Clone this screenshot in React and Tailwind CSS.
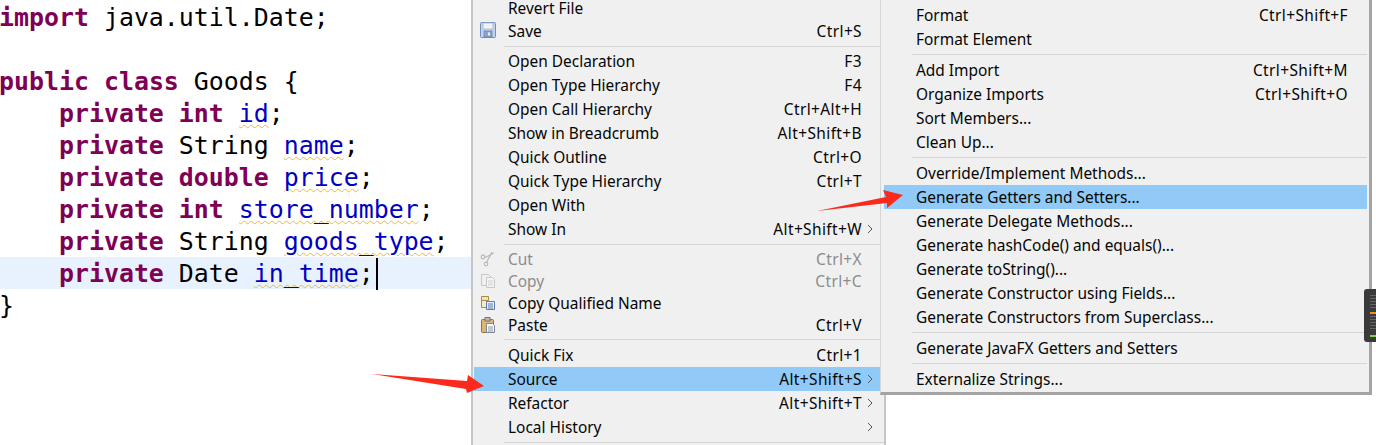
const K = ({ children }) => <span className="text-[#7f0055] font-bold">{children}</span>;
const F = ({ children }) => (
  <span className="text-[#0000c0] underline decoration-wavy decoration-[#e8b93a] decoration-1 underline-offset-[2px]">{children}</span>
);

const Code = ({ children, active }) => (
  <div className={`h-[32px] leading-[34px] whitespace-pre [text-indent:-1px] ${active ? "bg-[#e8f2fe]" : ""}`}>{children}</div>
);

const Chevron = () => (
  <svg width="6" height="10" viewBox="0 0 6 10" className="absolute left-[393px] top-[7px]">
    <path d="M1 1l4 4-4 4" fill="none" stroke="#555" strokeWidth="1" />
  </svg>
);

const SaveIcon = () => (
  <svg width="16" height="16" viewBox="0 0 16 16">
    <rect x="0.5" y="0.5" width="15" height="15" rx="1" fill="#c4d4ea" stroke="#6f8fbe" />
    <rect x="3" y="1" width="10" height="6" fill="#f2f2f2" stroke="#9fb3cf" strokeWidth="0.7" />
    <rect x="4" y="9" width="8" height="6" fill="#8aa5cc" stroke="#5f7fae" strokeWidth="0.7" />
    <rect x="8" y="10.5" width="2" height="3" fill="#eef2f8" />
  </svg>
);
const CutIcon = () => (
  <svg width="16" height="16" viewBox="0 0 16 16" fill="none" stroke="#b9b9b9" strokeWidth="1.2">
    <circle cx="3" cy="6" r="1.8" />
    <circle cx="6" cy="13" r="1.8" />
    <path d="M4.6 6.8 14 2M6.6 11.2 12 1" />
  </svg>
);
const CopyIcon = () => (
  <svg width="16" height="16" viewBox="0 0 16 16">
    <path d="M1.5 1.5h7l2 2v9h-9z" fill="#f0f0f0" stroke="#c6c6c6" />
    <path d="M6.5 4.5h6l2 2v8h-8z" fill="#f6f6f6" stroke="#c6c6c6" />
    <path d="M8 8h5M8 10h5M8 12h5" stroke="#d2d2d2" />
  </svg>
);
const QualifiedIcon = () => (
  <svg width="16" height="16" viewBox="0 0 16 16">
    <path d="M1.5 1.5h7v4h-7z" fill="#f3e2ae" stroke="#a08c4e" />
    <path d="M1.5 5.5h5v7h-5z" fill="#f7ecc8" stroke="#a08c4e" />
    <path d="M6.5 6.5h8v8h-8z" fill="#e6eefa" stroke="#5f7fae" />
    <path d="M8 9h5M8 11h5M8 13h5" stroke="#5f7fae" />
  </svg>
);
const PasteIcon = () => (
  <svg width="16" height="16" viewBox="0 0 16 16">
    <rect x="1.5" y="2.5" width="12" height="13" rx="1" fill="#dcb672" stroke="#94723a" />
    <rect x="5" y="0.5" width="5" height="3.5" fill="#b8b8b8" stroke="#777" />
    <path d="M6.5 6.5h6l2 2v7h-8z" fill="#fafafa" stroke="#7a8794" />
    <path d="M8 10h5M8 12h5M8 14h5" stroke="#8a97a6" />
  </svg>
);

const Row = ({ label, keys, h = "h-[24px]", on, off, icon, sub, right }) => (
  <div className={`relative flex items-center pt-[2px] ${h} ${on ? "bg-[#91c9f7]" : ""} ${off ? "text-[#8c8c8c]" : "text-[#050505]"}`}>
    {icon && <span className="absolute left-[6px] top-[3px] flex">{icon}</span>}
    <span className="whitespace-nowrap">{label}</span>
    <span className={`absolute whitespace-nowrap tracking-[0.4px] ${right}`}>{keys}</span>
    {sub && <Chevron />}
  </div>
);

const Sep = ({ h = "h-[7px]" }) => (
  <div className={`${h} flex items-start pt-[3px]`}>
    <div className="h-px w-full bg-[#d5d5d5]" />
  </div>
);

const M1 = (props) => <Row {...props} right="right-[22px]" />;
const M2 = (props) => <Row {...props} right="right-[19px]" />;

export default function App() {
  return (
    <div className="relative flex w-[1376px] h-[445px] overflow-hidden bg-white font-['Noto_Sans',sans-serif] text-[15.45px]">
      <div className="w-[471px] shrink-0 pt-[1px] font-['DejaVu_Sans_Mono',monospace] text-[24.9px] text-black">
        <Code><K>import</K> java.util.Date;</Code>
        <Code> </Code>
        <Code><K>public</K> <K>class</K> Goods {"{"}</Code>
        <Code>    <K>private</K> <K>int</K> <F>id</F>;</Code>
        <Code>    <K>private</K> String <F>name</F>;</Code>
        <Code>    <K>private</K> <K>double</K> <F>price</F>;</Code>
        <Code>    <K>private</K> <K>int</K> <F>store_number</F>;</Code>
        <Code>    <K>private</K> String <F>goods_type</F>;</Code>
        <Code active>
          <span className="relative">    <K>private</K> Date <F>in_time</F>;<span className="absolute right-[-4px] top-[-1px] w-[2px] h-[32px] bg-black" /></span>
        </Code>
        <Code>{"}"}</Code>
      </div>

      <div className="w-[415px] h-full shrink-0 bg-[#f0f0f0] border-l-2 border-r-2 border-[#c6c6c6] pl-[1px]">
        <div className="h-[19px] pl-[34px] leading-[17px] text-[#050505]">Revert File</div>
        <M1 label={<span className="pl-[34px]">Save</span>} keys="Ctrl+S" icon={<SaveIcon />} />
        <div className="pl-[30px]"><Sep h="h-[6px]" /></div>
        {[
          ["Open Declaration", "F3"],
          ["Open Type Hierarchy", "F4"],
          ["Open Call Hierarchy", "Ctrl+Alt+H"],
          ["Show in Breadcrumb", "Alt+Shift+B"],
          ["Quick Outline", "Ctrl+O"],
          ["Quick Type Hierarchy", "Ctrl+T"],
          ["Open With", ""],
        ].map(([l, k]) => (
          <M1 key={l} label={<span className="pl-[34px]">{l}</span>} keys={k} />
        ))}
        <M1 label={<span className="pl-[34px]">Show In</span>} keys="Alt+Shift+W" sub />
        <div className="pl-[30px]"><Sep /></div>
        <M1 h="h-[22px]" off icon={<CutIcon />} label={<span className="pl-[34px]">Cut</span>} keys="Ctrl+X" />
        <M1 h="h-[22px]" off icon={<CopyIcon />} label={<span className="pl-[34px]">Copy</span>} keys="Ctrl+C" />
        <M1 h="h-[22px]" icon={<QualifiedIcon />} label={<span className="pl-[34px]">Copy Qualified Name</span>} />
        <M1 h="h-[22px]" icon={<PasteIcon />} label={<span className="pl-[34px]">Paste</span>} keys="Ctrl+V" />
        <div className="pl-[30px]"><Sep /></div>
        <M1 label={<span className="pl-[34px]">Quick Fix</span>} keys="Ctrl+1" />
        <M1 on label={<span className="pl-[34px]">Source</span>} keys="Alt+Shift+S" sub />
        <M1 label={<span className="pl-[34px]">Refactor</span>} keys="Alt+Shift+T" sub />
        <M1 label={<span className="pl-[34px]">Local History</span>} sub />
        <div className="pl-[30px]"><Sep /></div>
      </div>

      {/* cascading submenu */}
      <div className="absolute left-[880px] top-0 w-[492px] h-[395px] bg-[#f0f0f0] border-l border-[#d4d4d4] border-r-[3px] border-b-[3px] border-r-[#a4a4a4] border-b-[#a4a4a4] pt-[3px] pl-[3px] pr-[2px]">
        {[
          [["Format", "Ctrl+Shift+F"], ["Format Element", ""]],
          [["Add Import", "Ctrl+Shift+M"], ["Organize Imports", "Ctrl+Shift+O"], ["Sort Members...", ""], ["Clean Up...", ""]],
          [
            ["Override/Implement Methods...", ""],
            ["Generate Getters and Setters...", "", true],
            ["Generate Delegate Methods...", ""],
            ["Generate hashCode() and equals()...", ""],
            ["Generate toString()...", ""],
            ["Generate Constructor using Fields...", ""],
            ["Generate Constructors from Superclass...", ""],
          ],
          [["Generate JavaFX Getters and Setters", ""]],
          [["Externalize Strings...", ""]],
        ].map((group, i, all) => (
          <div key={i}>
            {group.map(([l, k, on]) => (
              <M2 key={l} on={on} label={<span className="pl-[32px]">{l}</span>} keys={k} />
            ))}
            {i < all.length - 1 && (
              <div className="pl-[28px]"><Sep /></div>
            )}
          </div>
        ))}
      </div>

      {/* overview ruler peeking out on the right */}
      <div className="absolute left-[1364px] top-[289px] w-[12px] h-[53px] rounded-l-[3px] bg-[#3a3a3a] pl-[6px] flex flex-col gap-[2px] pt-[6px]">
        <div className="h-[15px] bg-[repeating-linear-gradient(#666_0_1px,#3a3a3a_1px_3px)]" />
        <div className="h-[2px] bg-[#f08c1e]" />
        <div className="h-[15px] bg-[repeating-linear-gradient(#666_0_1px,#3a3a3a_1px_3px)]" />
        <div className="h-[2px] mt-[2px] bg-[#7ed348]" />
      </div>

      {/* red annotation arrows */}
      <svg className="absolute left-0 top-0 pointer-events-none" width="1376" height="445">
        <polygon points="372,374 467,381 468,375 484,386 467,393 466,389" fill="#fb2a1c" />
        <polygon points="817,211 886,197 883,190 903,195 887,208 887,203" fill="#fb2a1c" />
      </svg>
    </div>
  );
}
